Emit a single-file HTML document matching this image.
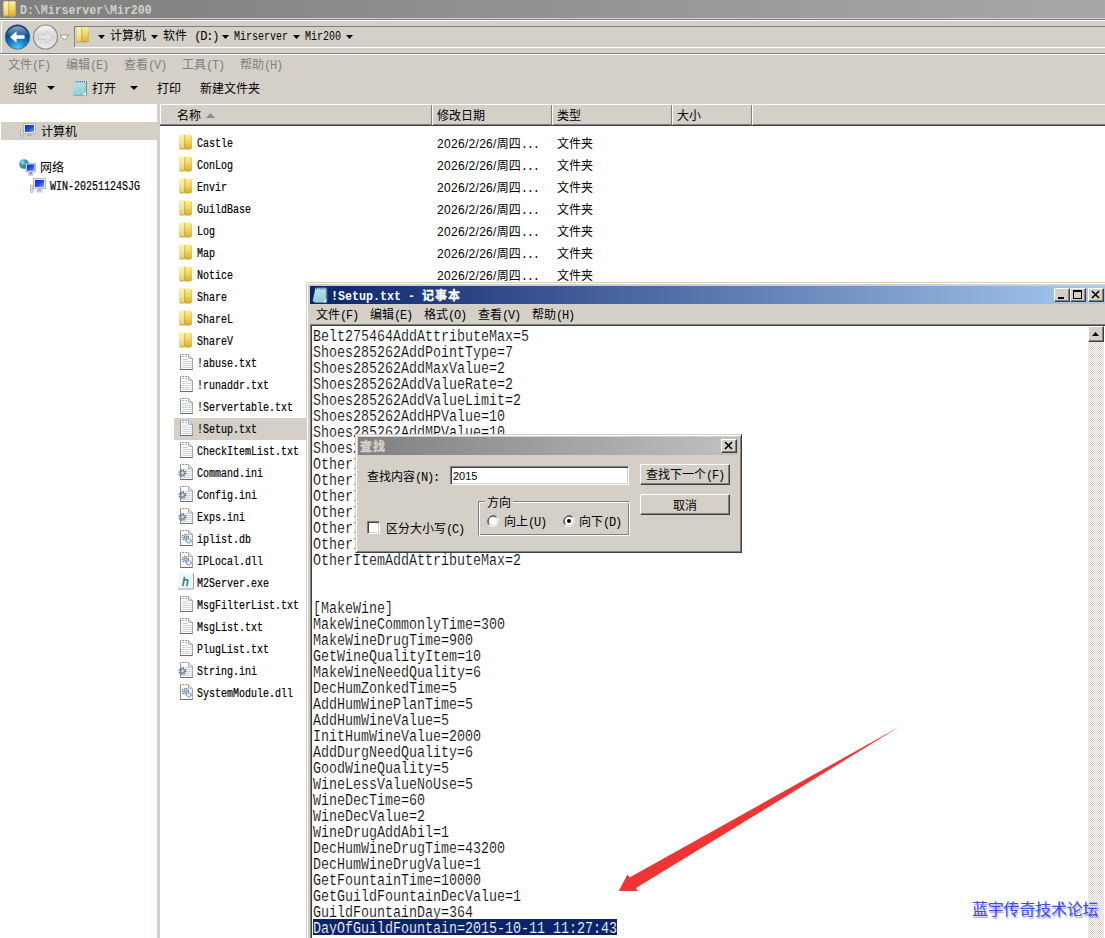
<!DOCTYPE html>
<html lang="zh-CN"><head><meta charset="utf-8"><title>D:\Mirserver\Mir200</title>
<style>
*{box-sizing:border-box;margin:0;padding:0}
html,body{width:1105px;height:938px;overflow:hidden;background:#d4d0c8}
body{position:relative;font-family:"Liberation Mono","Noto Sans CJK SC",monospace;font-size:12px;line-height:12px;color:#000}
.a{position:absolute;white-space:pre}
.t{position:absolute;white-space:pre;height:12px;line-height:16px}
.m{display:inline-block;transform:scaleX(.8333);transform-origin:0 0;white-space:pre;letter-spacing:0}
.l{letter-spacing:-1.2px}
.s{font-family:"Liberation Sans","Noto Sans CJK SC",sans-serif}
.b{font-weight:bold}
.hl{position:absolute;height:1px;left:0;width:1105px}
.btn{position:absolute;background:#d4d0c8;border:1px solid;border-color:#fff #404040 #404040 #fff;box-shadow:inset -1px -1px 0 #808080,inset 1px 1px 0 #d4d0c8}
.sunk{position:absolute;background:#fff;border:1px solid;border-color:#808080 #fff #fff #808080;box-shadow:inset 1px 1px 0 #404040,inset -1px -1px 0 #d4d0c8}
svg{position:absolute;overflow:visible}
</style></head>
<body>
<div class="a" style="left:0px;top:0px;width:1105px;height:18px;background:linear-gradient(90deg,#808080 0,#848484 15%,#a8a8a8 100%);"></div>
<svg style="left:3px;top:1px" width="13" height="16" viewBox="0 0 13 16"><linearGradient id="fgt" x1="0" y1="0" x2="0" y2="1"><stop offset="0" stop-color="#fcf29c"/><stop offset=".5" stop-color="#efd562"/><stop offset="1" stop-color="#d0aa32"/></linearGradient><path d="M.3 1.5 Q.3 .2 1.6 .2 L5 .2 L5.8 1 L6.6 .3 L11.4 .2 Q12.7 .2 12.7 1.5 L12.8 14 Q12.8 15.3 11.5 15.4 L7 15.7 L5.8 15 L2 15.7 Q.3 15.7 .3 14 Z" fill="url(#fgt)"/><rect x="1" y="1.2" width="4.2" height="13" fill="#fffbd8" opacity=".4"/><path d="M5.8 1 L5.8 15" stroke="#b0902a" stroke-width="1" opacity=".55"/><path d="M12.3 2 L12.4 14" stroke="#c9a638" stroke-width=".8" opacity=".6"/></svg>
<div class="t b" style="left:20px;top:3px;color:#d4d0c8;transform:scaleX(.962);transform-origin:0 0">D:\Mirserver\Mir200</div>
<div class="a" style="left:0px;top:19px;width:1105px;height:1px;background:#808080;"></div>
<div class="a" style="left:0px;top:20px;width:1105px;height:1px;background:#fff;"></div>
<div class="a" style="left:1px;top:21px;width:1px;height:32px;background:#fff;"></div>
<div class="a" style="left:0px;top:53px;width:1105px;height:1px;background:#808080;"></div>
<div class="a" style="left:0px;top:54px;width:1105px;height:1px;background:#fff;"></div>
<div class="a" style="left:74px;top:26px;width:1031px;height:1px;background:#808080;"></div>
<div class="a" style="left:74px;top:26px;width:1px;height:21px;background:#808080;"></div>
<div class="a" style="left:74px;top:47px;width:1031px;height:1px;background:#fff;"></div>
<svg style="left:4px;top:23px" width="66" height="28" viewBox="0 0 66 28">
<radialGradient id="bk" cx=".5" cy=".95" r=".9"><stop offset="0" stop-color="#4fd0f4"/><stop offset=".35" stop-color="#1b86c8"/><stop offset=".7" stop-color="#0d4f94"/><stop offset="1" stop-color="#0a3470"/></radialGradient>
<linearGradient id="bkh" x1="0" y1="0" x2="0" y2="1"><stop offset="0" stop-color="#fff" stop-opacity=".55"/><stop offset="1" stop-color="#fff" stop-opacity=".05"/></linearGradient>
<linearGradient id="fw" x1="0" y1="0" x2="0" y2="1"><stop offset="0" stop-color="#f4f4f4"/><stop offset=".5" stop-color="#d6d6d6"/><stop offset="1" stop-color="#ececec"/></linearGradient>
<circle cx="13.5" cy="14" r="12.3" fill="url(#bk)" stroke="#3a6f9f" stroke-width=".8"/>
<path d="M3 11 A11 11 0 0 1 24 11 Q13.5 15 3 11Z" fill="url(#bkh)"/>
<path d="M6 14 L12.5 8.2 L12.5 12.2 L20.5 12.2 L20.5 15.8 L12.5 15.8 L12.5 19.8 Z" fill="#fff"/>
<circle cx="41.5" cy="14" r="12" fill="url(#fw)" stroke="#8e8e8e" stroke-width="1.2"/>
<path d="M48.5 14 L42 7.8 L42 11.6 L34.5 11.6 L34.5 16.4 L42 16.4 L42 20.2 Z" fill="#e4e4e4" stroke="#c4c4c4" stroke-width=".8"/>
<path d="M56 12 H65 L60.5 17.2 Z" fill="#fff" stroke="#8c8c8c" stroke-width=".9"/>
</svg>
<svg style="left:76px;top:27px" width="13" height="16" viewBox="0 0 13 16"><linearGradient id="fga" x1="0" y1="0" x2="0" y2="1"><stop offset="0" stop-color="#fcf29c"/><stop offset=".5" stop-color="#efd562"/><stop offset="1" stop-color="#d0aa32"/></linearGradient><path d="M.3 1.5 Q.3 .2 1.6 .2 L5 .2 L5.8 1 L6.6 .3 L11.4 .2 Q12.7 .2 12.7 1.5 L12.8 14 Q12.8 15.3 11.5 15.4 L7 15.7 L5.8 15 L2 15.7 Q.3 15.7 .3 14 Z" fill="url(#fga)"/><rect x="1" y="1.2" width="4.2" height="13" fill="#fffbd8" opacity=".4"/><path d="M5.8 1 L5.8 15" stroke="#b0902a" stroke-width="1" opacity=".55"/><path d="M12.3 2 L12.4 14" stroke="#c9a638" stroke-width=".8" opacity=".6"/></svg>
<svg style="left:98px;top:35px" width="7" height="4" viewBox="0 0 7 4"><path d="M0 0H7L3.5 4Z" fill="#000"/></svg>
<div class="t" style="left:110px;top:29px;">计算机</div>
<svg style="left:151px;top:35px" width="7" height="4" viewBox="0 0 7 4"><path d="M0 0H7L3.5 4Z" fill="#000"/></svg>
<div class="t" style="left:163px;top:29px;">软件 <span class="l">(D:)</span></div>
<svg style="left:222px;top:35px" width="7" height="4" viewBox="0 0 7 4"><path d="M0 0H7L3.5 4Z" fill="#000"/></svg>
<div class="t" style="left:234px;top:29px;"><span class="m">Mirserver</span></div>
<svg style="left:293px;top:35px" width="7" height="4" viewBox="0 0 7 4"><path d="M0 0H7L3.5 4Z" fill="#000"/></svg>
<div class="t" style="left:305px;top:29px;"><span class="m">Mir200</span></div>
<svg style="left:346px;top:35px" width="7" height="4" viewBox="0 0 7 4"><path d="M0 0H7L3.5 4Z" fill="#000"/></svg>
<div class="t" style="left:8px;top:58px;color:#808080">文件<span class="l">(F)</span></div>
<div class="t" style="left:66px;top:58px;color:#808080">编辑<span class="l">(E)</span></div>
<div class="t" style="left:124px;top:58px;color:#808080">查看<span class="l">(V)</span></div>
<div class="t" style="left:182px;top:58px;color:#808080">工具<span class="l">(T)</span></div>
<div class="t" style="left:240px;top:58px;color:#808080">帮助<span class="l">(H)</span></div>
<div class="t" style="left:13px;top:82px;">组织</div>
<svg style="left:47px;top:86px" width="8" height="4" viewBox="0 0 8 4"><path d="M0 0H8L4.0 4Z" fill="#000"/></svg>
<svg style="left:72px;top:80px" width="15" height="16" viewBox="0 0 15 16"><linearGradient id="npa" x1="0" y1="0" x2=".3" y2="1"><stop offset="0" stop-color="#bfe7f1"/><stop offset="1" stop-color="#8fcfd8"/></linearGradient><path d="M3 .8 L14 .8 L14 15.2 L3 15.6 L.2 14 Z" fill="url(#npa)"/><path d="M10.5 15.4 L14 15.2 L14 10.5 Q13.2 14 10.5 15.4Z" fill="#fafdfe"/><path d="M14.4 1.5 V15.2" stroke="#6c747c" stroke-width=".9"/><path d="M1.5 15.3 L13.8 15.7" stroke="#8a92a4" stroke-width=".7"/><path d="M3.6 1.7H13" stroke="#2c343c" stroke-width="1.1" stroke-dasharray="1 1.1"/></svg>
<div class="t" style="left:92px;top:82px;">打开</div>
<svg style="left:130px;top:86px" width="8" height="4" viewBox="0 0 8 4"><path d="M0 0H8L4.0 4Z" fill="#000"/></svg>
<div class="t" style="left:157px;top:82px;">打印</div>
<div class="t" style="left:200px;top:82px;">新建文件夹</div>
<div class="a" style="left:0px;top:104px;width:157px;height:834px;background:#fff;"></div>
<div class="a" style="left:157px;top:104px;width:3px;height:834px;background:#d4d0c8;"></div>
<div class="a" style="left:160px;top:104px;width:945px;height:834px;background:#fff;"></div>
<div class="a" style="left:1px;top:122px;width:157px;height:18px;background:#d4d0c8;"></div>
<svg style="left:20px;top:123px" width="16" height="15" viewBox="0 0 16 15"><linearGradient id="cg1" x1="0" y1="0" x2="1" y2="1"><stop offset="0" stop-color="#1a2bb8"/><stop offset=".5" stop-color="#2447d8"/><stop offset="1" stop-color="#7fa8f0"/></linearGradient><rect x="3.5" y=".5" width="12" height="10" fill="#dfe6ee" stroke="#b4bcc8"/><rect x="5" y="2" width="9" height="7" fill="url(#cg1)"/><path d="M8 11H11L12.5 13.5H6.5Z" fill="#aab3bf"/><rect x="6" y="13.3" width="7" height="1.2" fill="#c9d0d8"/><rect x=".5" y="7" width="2.5" height="7.5" rx=".8" fill="#e9ecef" stroke="#9aa2ad" stroke-width=".8"/><rect x="1.2" y="11.5" width="1.2" height="1.2" fill="#9bbf6a"/></svg>
<div class="t" style="left:41px;top:125px;">计算机</div>
<svg style="left:19px;top:159px" width="17" height="17" viewBox="0 0 17 17"><radialGradient id="gl" cx=".35" cy=".3" r=".8"><stop offset="0" stop-color="#9fe0f8"/><stop offset=".5" stop-color="#2d8fd8"/><stop offset="1" stop-color="#1a4fa8"/></radialGradient><linearGradient id="ng" x1="0" y1="0" x2="1" y2="1"><stop offset="0" stop-color="#1a2bb8"/><stop offset=".5" stop-color="#2447d8"/><stop offset="1" stop-color="#6f9cf0"/></linearGradient><circle cx="5" cy="5" r="4.8" fill="url(#gl)"/><path d="M1.5 6.5 Q3 4.5 4.2 6 Q5 8 3.5 9.3 Q2 8.5 1.5 6.5Z M4.5 1 Q7 1.2 7.2 3 Q5.8 3.8 4.6 2.6Z" fill="#3fae49"/><rect x="7" y="4.5" width="9.5" height="8.5" fill="#dfe6ee" stroke="#9fb0c8" stroke-width=".8"/><rect x="8" y="5.5" width="7.5" height="6.2" fill="url(#ng)"/><path d="M10.5 13H13L14 15.5H9.5Z" fill="#8f9aa8"/><rect x="9" y="15.3" width="5.5" height="1.2" fill="#b4bcc8"/></svg>
<div class="t" style="left:40px;top:161px;">网络</div>
<svg style="left:30px;top:178px" width="16" height="15" viewBox="0 0 16 15"><linearGradient id="cg2" x1="0" y1="0" x2="1" y2="1"><stop offset="0" stop-color="#1a2bb8"/><stop offset=".5" stop-color="#2447d8"/><stop offset="1" stop-color="#7fa8f0"/></linearGradient><rect x="3.5" y=".5" width="12" height="10" fill="#dfe6ee" stroke="#b4bcc8"/><rect x="5" y="2" width="9" height="7" fill="url(#cg2)"/><path d="M8 11H11L12.5 13.5H6.5Z" fill="#aab3bf"/><rect x="6" y="13.3" width="7" height="1.2" fill="#c9d0d8"/><rect x=".5" y="7" width="2.5" height="7.5" rx=".8" fill="#e9ecef" stroke="#9aa2ad" stroke-width=".8"/><rect x="1.2" y="11.5" width="1.2" height="1.2" fill="#9bbf6a"/></svg>
<div class="t" style="left:50px;top:179px;-webkit-text-stroke:.2px #000"><span class="m">WIN-20251124SJG</span></div>
<div class="a" style="left:160px;top:104px;width:945px;height:22px;background:#d4d0c8;"></div>
<div class="a" style="left:160px;top:104px;width:945px;height:1px;background:#fff;"></div>
<div class="a" style="left:160px;top:104px;width:1px;height:20px;background:#fff;"></div>
<div class="a" style="left:160px;top:124px;width:945px;height:1px;background:#808080;"></div>
<div class="a" style="left:160px;top:125px;width:945px;height:1px;background:#404040;"></div>
<div class="a" style="left:431px;top:105px;width:1px;height:20px;background:#808080;"></div>
<div class="a" style="left:432px;top:105px;width:1px;height:20px;background:#fff;"></div>
<div class="a" style="left:551px;top:105px;width:1px;height:20px;background:#808080;"></div>
<div class="a" style="left:552px;top:105px;width:1px;height:20px;background:#fff;"></div>
<div class="a" style="left:671px;top:105px;width:1px;height:20px;background:#808080;"></div>
<div class="a" style="left:672px;top:105px;width:1px;height:20px;background:#fff;"></div>
<div class="a" style="left:751px;top:105px;width:1px;height:20px;background:#808080;"></div>
<div class="a" style="left:752px;top:105px;width:1px;height:20px;background:#fff;"></div>
<div class="t" style="left:177px;top:109px;">名称</div>
<svg style="left:206px;top:113px" width="9" height="5" viewBox="0 0 9 5"><path d="M0 5L4.5 0L9 5Z" fill="#8a8a8a"/></svg>
<div class="t" style="left:437px;top:109px;">修改日期</div>
<div class="t" style="left:557px;top:109px;">类型</div>
<div class="t" style="left:677px;top:109px;">大小</div>
<svg style="left:179px;top:134px" width="13" height="16" viewBox="0 0 13 16"><linearGradient id="fgf0" x1="0" y1="0" x2="0" y2="1"><stop offset="0" stop-color="#fcf29c"/><stop offset=".5" stop-color="#efd562"/><stop offset="1" stop-color="#d0aa32"/></linearGradient><path d="M.3 1.5 Q.3 .2 1.6 .2 L5 .2 L5.8 1 L6.6 .3 L11.4 .2 Q12.7 .2 12.7 1.5 L12.8 14 Q12.8 15.3 11.5 15.4 L7 15.7 L5.8 15 L2 15.7 Q.3 15.7 .3 14 Z" fill="url(#fgf0)"/><rect x="1" y="1.2" width="4.2" height="13" fill="#fffbd8" opacity=".4"/><path d="M5.8 1 L5.8 15" stroke="#b0902a" stroke-width="1" opacity=".55"/><path d="M12.3 2 L12.4 14" stroke="#c9a638" stroke-width=".8" opacity=".6"/></svg>
<div class="t" style="left:197px;top:136px;-webkit-text-stroke:.2px #000"><span class="m">Castle</span></div>
<div class="t" style="left:437px;top:136px;"><span class="s" style="letter-spacing:.3px">2026/2/26/</span>周四<span class="l">...</span></div>
<div class="t" style="left:557px;top:137px;">文件夹</div>
<svg style="left:179px;top:156px" width="13" height="16" viewBox="0 0 13 16"><linearGradient id="fgf1" x1="0" y1="0" x2="0" y2="1"><stop offset="0" stop-color="#fcf29c"/><stop offset=".5" stop-color="#efd562"/><stop offset="1" stop-color="#d0aa32"/></linearGradient><path d="M.3 1.5 Q.3 .2 1.6 .2 L5 .2 L5.8 1 L6.6 .3 L11.4 .2 Q12.7 .2 12.7 1.5 L12.8 14 Q12.8 15.3 11.5 15.4 L7 15.7 L5.8 15 L2 15.7 Q.3 15.7 .3 14 Z" fill="url(#fgf1)"/><rect x="1" y="1.2" width="4.2" height="13" fill="#fffbd8" opacity=".4"/><path d="M5.8 1 L5.8 15" stroke="#b0902a" stroke-width="1" opacity=".55"/><path d="M12.3 2 L12.4 14" stroke="#c9a638" stroke-width=".8" opacity=".6"/></svg>
<div class="t" style="left:197px;top:158px;-webkit-text-stroke:.2px #000"><span class="m">ConLog</span></div>
<div class="t" style="left:437px;top:158px;"><span class="s" style="letter-spacing:.3px">2026/2/26/</span>周四<span class="l">...</span></div>
<div class="t" style="left:557px;top:159px;">文件夹</div>
<svg style="left:179px;top:178px" width="13" height="16" viewBox="0 0 13 16"><linearGradient id="fgf2" x1="0" y1="0" x2="0" y2="1"><stop offset="0" stop-color="#fcf29c"/><stop offset=".5" stop-color="#efd562"/><stop offset="1" stop-color="#d0aa32"/></linearGradient><path d="M.3 1.5 Q.3 .2 1.6 .2 L5 .2 L5.8 1 L6.6 .3 L11.4 .2 Q12.7 .2 12.7 1.5 L12.8 14 Q12.8 15.3 11.5 15.4 L7 15.7 L5.8 15 L2 15.7 Q.3 15.7 .3 14 Z" fill="url(#fgf2)"/><rect x="1" y="1.2" width="4.2" height="13" fill="#fffbd8" opacity=".4"/><path d="M5.8 1 L5.8 15" stroke="#b0902a" stroke-width="1" opacity=".55"/><path d="M12.3 2 L12.4 14" stroke="#c9a638" stroke-width=".8" opacity=".6"/></svg>
<div class="t" style="left:197px;top:180px;-webkit-text-stroke:.2px #000"><span class="m">Envir</span></div>
<div class="t" style="left:437px;top:180px;"><span class="s" style="letter-spacing:.3px">2026/2/26/</span>周四<span class="l">...</span></div>
<div class="t" style="left:557px;top:181px;">文件夹</div>
<svg style="left:179px;top:200px" width="13" height="16" viewBox="0 0 13 16"><linearGradient id="fgf3" x1="0" y1="0" x2="0" y2="1"><stop offset="0" stop-color="#fcf29c"/><stop offset=".5" stop-color="#efd562"/><stop offset="1" stop-color="#d0aa32"/></linearGradient><path d="M.3 1.5 Q.3 .2 1.6 .2 L5 .2 L5.8 1 L6.6 .3 L11.4 .2 Q12.7 .2 12.7 1.5 L12.8 14 Q12.8 15.3 11.5 15.4 L7 15.7 L5.8 15 L2 15.7 Q.3 15.7 .3 14 Z" fill="url(#fgf3)"/><rect x="1" y="1.2" width="4.2" height="13" fill="#fffbd8" opacity=".4"/><path d="M5.8 1 L5.8 15" stroke="#b0902a" stroke-width="1" opacity=".55"/><path d="M12.3 2 L12.4 14" stroke="#c9a638" stroke-width=".8" opacity=".6"/></svg>
<div class="t" style="left:197px;top:202px;-webkit-text-stroke:.2px #000"><span class="m">GuildBase</span></div>
<div class="t" style="left:437px;top:202px;"><span class="s" style="letter-spacing:.3px">2026/2/26/</span>周四<span class="l">...</span></div>
<div class="t" style="left:557px;top:203px;">文件夹</div>
<svg style="left:179px;top:222px" width="13" height="16" viewBox="0 0 13 16"><linearGradient id="fgf4" x1="0" y1="0" x2="0" y2="1"><stop offset="0" stop-color="#fcf29c"/><stop offset=".5" stop-color="#efd562"/><stop offset="1" stop-color="#d0aa32"/></linearGradient><path d="M.3 1.5 Q.3 .2 1.6 .2 L5 .2 L5.8 1 L6.6 .3 L11.4 .2 Q12.7 .2 12.7 1.5 L12.8 14 Q12.8 15.3 11.5 15.4 L7 15.7 L5.8 15 L2 15.7 Q.3 15.7 .3 14 Z" fill="url(#fgf4)"/><rect x="1" y="1.2" width="4.2" height="13" fill="#fffbd8" opacity=".4"/><path d="M5.8 1 L5.8 15" stroke="#b0902a" stroke-width="1" opacity=".55"/><path d="M12.3 2 L12.4 14" stroke="#c9a638" stroke-width=".8" opacity=".6"/></svg>
<div class="t" style="left:197px;top:224px;-webkit-text-stroke:.2px #000"><span class="m">Log</span></div>
<div class="t" style="left:437px;top:224px;"><span class="s" style="letter-spacing:.3px">2026/2/26/</span>周四<span class="l">...</span></div>
<div class="t" style="left:557px;top:225px;">文件夹</div>
<svg style="left:179px;top:244px" width="13" height="16" viewBox="0 0 13 16"><linearGradient id="fgf5" x1="0" y1="0" x2="0" y2="1"><stop offset="0" stop-color="#fcf29c"/><stop offset=".5" stop-color="#efd562"/><stop offset="1" stop-color="#d0aa32"/></linearGradient><path d="M.3 1.5 Q.3 .2 1.6 .2 L5 .2 L5.8 1 L6.6 .3 L11.4 .2 Q12.7 .2 12.7 1.5 L12.8 14 Q12.8 15.3 11.5 15.4 L7 15.7 L5.8 15 L2 15.7 Q.3 15.7 .3 14 Z" fill="url(#fgf5)"/><rect x="1" y="1.2" width="4.2" height="13" fill="#fffbd8" opacity=".4"/><path d="M5.8 1 L5.8 15" stroke="#b0902a" stroke-width="1" opacity=".55"/><path d="M12.3 2 L12.4 14" stroke="#c9a638" stroke-width=".8" opacity=".6"/></svg>
<div class="t" style="left:197px;top:246px;-webkit-text-stroke:.2px #000"><span class="m">Map</span></div>
<div class="t" style="left:437px;top:246px;"><span class="s" style="letter-spacing:.3px">2026/2/26/</span>周四<span class="l">...</span></div>
<div class="t" style="left:557px;top:247px;">文件夹</div>
<svg style="left:179px;top:266px" width="13" height="16" viewBox="0 0 13 16"><linearGradient id="fgf6" x1="0" y1="0" x2="0" y2="1"><stop offset="0" stop-color="#fcf29c"/><stop offset=".5" stop-color="#efd562"/><stop offset="1" stop-color="#d0aa32"/></linearGradient><path d="M.3 1.5 Q.3 .2 1.6 .2 L5 .2 L5.8 1 L6.6 .3 L11.4 .2 Q12.7 .2 12.7 1.5 L12.8 14 Q12.8 15.3 11.5 15.4 L7 15.7 L5.8 15 L2 15.7 Q.3 15.7 .3 14 Z" fill="url(#fgf6)"/><rect x="1" y="1.2" width="4.2" height="13" fill="#fffbd8" opacity=".4"/><path d="M5.8 1 L5.8 15" stroke="#b0902a" stroke-width="1" opacity=".55"/><path d="M12.3 2 L12.4 14" stroke="#c9a638" stroke-width=".8" opacity=".6"/></svg>
<div class="t" style="left:197px;top:268px;-webkit-text-stroke:.2px #000"><span class="m">Notice</span></div>
<div class="t" style="left:437px;top:268px;"><span class="s" style="letter-spacing:.3px">2026/2/26/</span>周四<span class="l">...</span></div>
<div class="t" style="left:557px;top:269px;">文件夹</div>
<svg style="left:179px;top:288px" width="13" height="16" viewBox="0 0 13 16"><linearGradient id="fgf7" x1="0" y1="0" x2="0" y2="1"><stop offset="0" stop-color="#fcf29c"/><stop offset=".5" stop-color="#efd562"/><stop offset="1" stop-color="#d0aa32"/></linearGradient><path d="M.3 1.5 Q.3 .2 1.6 .2 L5 .2 L5.8 1 L6.6 .3 L11.4 .2 Q12.7 .2 12.7 1.5 L12.8 14 Q12.8 15.3 11.5 15.4 L7 15.7 L5.8 15 L2 15.7 Q.3 15.7 .3 14 Z" fill="url(#fgf7)"/><rect x="1" y="1.2" width="4.2" height="13" fill="#fffbd8" opacity=".4"/><path d="M5.8 1 L5.8 15" stroke="#b0902a" stroke-width="1" opacity=".55"/><path d="M12.3 2 L12.4 14" stroke="#c9a638" stroke-width=".8" opacity=".6"/></svg>
<div class="t" style="left:197px;top:290px;-webkit-text-stroke:.2px #000"><span class="m">Share</span></div>
<div class="t" style="left:437px;top:290px;"><span class="s" style="letter-spacing:.3px">2026/2/26/</span>周四<span class="l">...</span></div>
<div class="t" style="left:557px;top:291px;">文件夹</div>
<svg style="left:179px;top:310px" width="13" height="16" viewBox="0 0 13 16"><linearGradient id="fgf8" x1="0" y1="0" x2="0" y2="1"><stop offset="0" stop-color="#fcf29c"/><stop offset=".5" stop-color="#efd562"/><stop offset="1" stop-color="#d0aa32"/></linearGradient><path d="M.3 1.5 Q.3 .2 1.6 .2 L5 .2 L5.8 1 L6.6 .3 L11.4 .2 Q12.7 .2 12.7 1.5 L12.8 14 Q12.8 15.3 11.5 15.4 L7 15.7 L5.8 15 L2 15.7 Q.3 15.7 .3 14 Z" fill="url(#fgf8)"/><rect x="1" y="1.2" width="4.2" height="13" fill="#fffbd8" opacity=".4"/><path d="M5.8 1 L5.8 15" stroke="#b0902a" stroke-width="1" opacity=".55"/><path d="M12.3 2 L12.4 14" stroke="#c9a638" stroke-width=".8" opacity=".6"/></svg>
<div class="t" style="left:197px;top:312px;-webkit-text-stroke:.2px #000"><span class="m">ShareL</span></div>
<svg style="left:179px;top:332px" width="13" height="16" viewBox="0 0 13 16"><linearGradient id="fgf9" x1="0" y1="0" x2="0" y2="1"><stop offset="0" stop-color="#fcf29c"/><stop offset=".5" stop-color="#efd562"/><stop offset="1" stop-color="#d0aa32"/></linearGradient><path d="M.3 1.5 Q.3 .2 1.6 .2 L5 .2 L5.8 1 L6.6 .3 L11.4 .2 Q12.7 .2 12.7 1.5 L12.8 14 Q12.8 15.3 11.5 15.4 L7 15.7 L5.8 15 L2 15.7 Q.3 15.7 .3 14 Z" fill="url(#fgf9)"/><rect x="1" y="1.2" width="4.2" height="13" fill="#fffbd8" opacity=".4"/><path d="M5.8 1 L5.8 15" stroke="#b0902a" stroke-width="1" opacity=".55"/><path d="M12.3 2 L12.4 14" stroke="#c9a638" stroke-width=".8" opacity=".6"/></svg>
<div class="t" style="left:197px;top:334px;-webkit-text-stroke:.2px #000"><span class="m">ShareV</span></div>
<svg style="left:180px;top:354px" width="13" height="16" viewBox="0 0 13 16"><path d="M.5 .5 L8.5 .5 L12.3 4.3 L12.3 15.5 L.5 15.5 Z" fill="#fdfdfd" stroke="#909090"/><path d="M.2 15.5H12.6" stroke="#6e6e6e" stroke-width="1"/><path d="M8.5 .5 L8.5 4.3 L12.3 4.3" fill="#e9e9e9" stroke="#9a9a9a" stroke-width=".8"/><path d="M1 .5H8" stroke="#fff" stroke-width="1" stroke-dasharray="1.3 1.7" opacity=".7"/><path d="M2 5.5H8M2 7.5H11M2 9.5H11M2 11.5H11M2 13.5H11" stroke="#c7d7e6" stroke-width="1"/><path d="M2 2.5H4M5 2.5H7" stroke="#b0b0b0" stroke-width="1"/></svg>
<div class="t" style="left:197px;top:356px;-webkit-text-stroke:.2px #000"><span class="m">!abuse.txt</span></div>
<svg style="left:180px;top:376px" width="13" height="16" viewBox="0 0 13 16"><path d="M.5 .5 L8.5 .5 L12.3 4.3 L12.3 15.5 L.5 15.5 Z" fill="#fdfdfd" stroke="#909090"/><path d="M.2 15.5H12.6" stroke="#6e6e6e" stroke-width="1"/><path d="M8.5 .5 L8.5 4.3 L12.3 4.3" fill="#e9e9e9" stroke="#9a9a9a" stroke-width=".8"/><path d="M1 .5H8" stroke="#fff" stroke-width="1" stroke-dasharray="1.3 1.7" opacity=".7"/><path d="M2 5.5H8M2 7.5H11M2 9.5H11M2 11.5H11M2 13.5H11" stroke="#c7d7e6" stroke-width="1"/><path d="M2 2.5H4M5 2.5H7" stroke="#b0b0b0" stroke-width="1"/></svg>
<div class="t" style="left:197px;top:378px;-webkit-text-stroke:.2px #000"><span class="m">!runaddr.txt</span></div>
<svg style="left:180px;top:398px" width="13" height="16" viewBox="0 0 13 16"><path d="M.5 .5 L8.5 .5 L12.3 4.3 L12.3 15.5 L.5 15.5 Z" fill="#fdfdfd" stroke="#909090"/><path d="M.2 15.5H12.6" stroke="#6e6e6e" stroke-width="1"/><path d="M8.5 .5 L8.5 4.3 L12.3 4.3" fill="#e9e9e9" stroke="#9a9a9a" stroke-width=".8"/><path d="M1 .5H8" stroke="#fff" stroke-width="1" stroke-dasharray="1.3 1.7" opacity=".7"/><path d="M2 5.5H8M2 7.5H11M2 9.5H11M2 11.5H11M2 13.5H11" stroke="#c7d7e6" stroke-width="1"/><path d="M2 2.5H4M5 2.5H7" stroke="#b0b0b0" stroke-width="1"/></svg>
<div class="t" style="left:197px;top:400px;-webkit-text-stroke:.2px #000"><span class="m">!Servertable.txt</span></div>
<div class="a" style="left:174px;top:418px;width:200px;height:22px;background:#d4d0c8;"></div>
<svg style="left:180px;top:420px" width="13" height="16" viewBox="0 0 13 16"><path d="M.5 .5 L8.5 .5 L12.3 4.3 L12.3 15.5 L.5 15.5 Z" fill="#fdfdfd" stroke="#909090"/><path d="M.2 15.5H12.6" stroke="#6e6e6e" stroke-width="1"/><path d="M8.5 .5 L8.5 4.3 L12.3 4.3" fill="#e9e9e9" stroke="#9a9a9a" stroke-width=".8"/><path d="M1 .5H8" stroke="#fff" stroke-width="1" stroke-dasharray="1.3 1.7" opacity=".7"/><path d="M2 5.5H8M2 7.5H11M2 9.5H11M2 11.5H11M2 13.5H11" stroke="#c7d7e6" stroke-width="1"/><path d="M2 2.5H4M5 2.5H7" stroke="#b0b0b0" stroke-width="1"/></svg>
<div class="t" style="left:197px;top:422px;-webkit-text-stroke:.2px #000"><span class="m">!Setup.txt</span></div>
<svg style="left:180px;top:442px" width="13" height="16" viewBox="0 0 13 16"><path d="M.5 .5 L8.5 .5 L12.3 4.3 L12.3 15.5 L.5 15.5 Z" fill="#fdfdfd" stroke="#909090"/><path d="M.2 15.5H12.6" stroke="#6e6e6e" stroke-width="1"/><path d="M8.5 .5 L8.5 4.3 L12.3 4.3" fill="#e9e9e9" stroke="#9a9a9a" stroke-width=".8"/><path d="M1 .5H8" stroke="#fff" stroke-width="1" stroke-dasharray="1.3 1.7" opacity=".7"/><path d="M2 5.5H8M2 7.5H11M2 9.5H11M2 11.5H11M2 13.5H11" stroke="#c7d7e6" stroke-width="1"/><path d="M2 2.5H4M5 2.5H7" stroke="#b0b0b0" stroke-width="1"/></svg>
<div class="t" style="left:197px;top:444px;-webkit-text-stroke:.2px #000"><span class="m">CheckItemList.txt</span></div>
<svg style="left:180px;top:464px" width="13" height="16" viewBox="0 0 13 16"><path d="M.5 .5 L8.5 .5 L12.3 4.3 L12.3 15.5 L.5 15.5 Z" fill="#fdfdfd" stroke="#909090"/><path d="M.2 15.5H12.6" stroke="#6e6e6e" stroke-width="1"/><path d="M8.5 .5 L8.5 4.3 L12.3 4.3" fill="#e9e9e9" stroke="#9a9a9a" stroke-width=".8"/><path d="M1 .5H8" stroke="#fff" stroke-width="1" stroke-dasharray="1.3 1.7" opacity=".7"/><path d="M6 5.5H11M6 7.5H11M6 9.5H11M6 11.5H11M2 13.5H11" stroke="#c7d7e6" stroke-width="1"/><circle cx="2.5" cy="9" r="3.2" fill="none" stroke="#6f8299" stroke-width="2" stroke-dasharray="1.4 1.1"/><circle cx="2.5" cy="9" r="2.3" fill="#9fb2c8" stroke="#5f738b" stroke-width=".8"/><circle cx="2.5" cy="9" r=".9" fill="#eef3f8"/></svg>
<div class="t" style="left:197px;top:466px;-webkit-text-stroke:.2px #000"><span class="m">Command.ini</span></div>
<svg style="left:180px;top:486px" width="13" height="16" viewBox="0 0 13 16"><path d="M.5 .5 L8.5 .5 L12.3 4.3 L12.3 15.5 L.5 15.5 Z" fill="#fdfdfd" stroke="#909090"/><path d="M.2 15.5H12.6" stroke="#6e6e6e" stroke-width="1"/><path d="M8.5 .5 L8.5 4.3 L12.3 4.3" fill="#e9e9e9" stroke="#9a9a9a" stroke-width=".8"/><path d="M1 .5H8" stroke="#fff" stroke-width="1" stroke-dasharray="1.3 1.7" opacity=".7"/><path d="M6 5.5H11M6 7.5H11M6 9.5H11M6 11.5H11M2 13.5H11" stroke="#c7d7e6" stroke-width="1"/><circle cx="2.5" cy="9" r="3.2" fill="none" stroke="#6f8299" stroke-width="2" stroke-dasharray="1.4 1.1"/><circle cx="2.5" cy="9" r="2.3" fill="#9fb2c8" stroke="#5f738b" stroke-width=".8"/><circle cx="2.5" cy="9" r=".9" fill="#eef3f8"/></svg>
<div class="t" style="left:197px;top:488px;-webkit-text-stroke:.2px #000"><span class="m">Config.ini</span></div>
<svg style="left:180px;top:508px" width="13" height="16" viewBox="0 0 13 16"><path d="M.5 .5 L8.5 .5 L12.3 4.3 L12.3 15.5 L.5 15.5 Z" fill="#fdfdfd" stroke="#909090"/><path d="M.2 15.5H12.6" stroke="#6e6e6e" stroke-width="1"/><path d="M8.5 .5 L8.5 4.3 L12.3 4.3" fill="#e9e9e9" stroke="#9a9a9a" stroke-width=".8"/><path d="M1 .5H8" stroke="#fff" stroke-width="1" stroke-dasharray="1.3 1.7" opacity=".7"/><path d="M6 5.5H11M6 7.5H11M6 9.5H11M6 11.5H11M2 13.5H11" stroke="#c7d7e6" stroke-width="1"/><circle cx="2.5" cy="9" r="3.2" fill="none" stroke="#6f8299" stroke-width="2" stroke-dasharray="1.4 1.1"/><circle cx="2.5" cy="9" r="2.3" fill="#9fb2c8" stroke="#5f738b" stroke-width=".8"/><circle cx="2.5" cy="9" r=".9" fill="#eef3f8"/></svg>
<div class="t" style="left:197px;top:510px;-webkit-text-stroke:.2px #000"><span class="m">Exps.ini</span></div>
<svg style="left:180px;top:530px" width="13" height="16" viewBox="0 0 13 16"><path d="M.5 .5 L8.5 .5 L12.3 4.3 L12.3 15.5 L.5 15.5 Z" fill="#fdfdfd" stroke="#909090"/><path d="M.2 15.5H12.6" stroke="#6e6e6e" stroke-width="1"/><path d="M8.5 .5 L8.5 4.3 L12.3 4.3" fill="#e9e9e9" stroke="#9a9a9a" stroke-width=".8"/><path d="M1 .5H8" stroke="#fff" stroke-width="1" stroke-dasharray="1.3 1.7" opacity=".7"/><circle cx="5.4" cy="7.3" r="3" fill="#dcecf8" stroke="#2f5574" stroke-width="1.1" stroke-dasharray="1 1.1"/><circle cx="5.4" cy="7.3" r="1.3" fill="#f4f9fd" stroke="#2f5574" stroke-width=".8"/><circle cx="8.7" cy="10.7" r="2.3" fill="#cfe3f3" stroke="#2f5574" stroke-width="1" stroke-dasharray="1 .8"/><circle cx="8.7" cy="10.7" r=".8" fill="#fff"/></svg>
<div class="t" style="left:197px;top:532px;-webkit-text-stroke:.2px #000"><span class="m">iplist.db</span></div>
<svg style="left:180px;top:552px" width="13" height="16" viewBox="0 0 13 16"><path d="M.5 .5 L8.5 .5 L12.3 4.3 L12.3 15.5 L.5 15.5 Z" fill="#fdfdfd" stroke="#909090"/><path d="M.2 15.5H12.6" stroke="#6e6e6e" stroke-width="1"/><path d="M8.5 .5 L8.5 4.3 L12.3 4.3" fill="#e9e9e9" stroke="#9a9a9a" stroke-width=".8"/><path d="M1 .5H8" stroke="#fff" stroke-width="1" stroke-dasharray="1.3 1.7" opacity=".7"/><circle cx="5.4" cy="7.3" r="3" fill="#dcecf8" stroke="#2f5574" stroke-width="1.1" stroke-dasharray="1 1.1"/><circle cx="5.4" cy="7.3" r="1.3" fill="#f4f9fd" stroke="#2f5574" stroke-width=".8"/><circle cx="8.7" cy="10.7" r="2.3" fill="#cfe3f3" stroke="#2f5574" stroke-width="1" stroke-dasharray="1 .8"/><circle cx="8.7" cy="10.7" r=".8" fill="#fff"/></svg>
<div class="t" style="left:197px;top:554px;-webkit-text-stroke:.2px #000"><span class="m">IPLocal.dll</span></div>
<svg style="left:178px;top:573px" width="16" height="17" viewBox="0 0 16 17"><rect x="0" y="0" width="15.5" height="16" fill="#eef9fb"/><path d="M15.5 0 V16 H0" fill="none" stroke="#8fa0a6" stroke-width="1"/><text x="4" y="12.6" font-family="Liberation Sans, sans-serif" font-style="italic" font-size="12" fill="#2a6a66" stroke="#2a6a66" stroke-width=".3">h</text></svg>
<div class="t" style="left:197px;top:576px;-webkit-text-stroke:.2px #000"><span class="m">M2Server.exe</span></div>
<svg style="left:180px;top:596px" width="13" height="16" viewBox="0 0 13 16"><path d="M.5 .5 L8.5 .5 L12.3 4.3 L12.3 15.5 L.5 15.5 Z" fill="#fdfdfd" stroke="#909090"/><path d="M.2 15.5H12.6" stroke="#6e6e6e" stroke-width="1"/><path d="M8.5 .5 L8.5 4.3 L12.3 4.3" fill="#e9e9e9" stroke="#9a9a9a" stroke-width=".8"/><path d="M1 .5H8" stroke="#fff" stroke-width="1" stroke-dasharray="1.3 1.7" opacity=".7"/><path d="M2 5.5H8M2 7.5H11M2 9.5H11M2 11.5H11M2 13.5H11" stroke="#c7d7e6" stroke-width="1"/><path d="M2 2.5H4M5 2.5H7" stroke="#b0b0b0" stroke-width="1"/></svg>
<div class="t" style="left:197px;top:598px;-webkit-text-stroke:.2px #000"><span class="m">MsgFilterList.txt</span></div>
<svg style="left:180px;top:618px" width="13" height="16" viewBox="0 0 13 16"><path d="M.5 .5 L8.5 .5 L12.3 4.3 L12.3 15.5 L.5 15.5 Z" fill="#fdfdfd" stroke="#909090"/><path d="M.2 15.5H12.6" stroke="#6e6e6e" stroke-width="1"/><path d="M8.5 .5 L8.5 4.3 L12.3 4.3" fill="#e9e9e9" stroke="#9a9a9a" stroke-width=".8"/><path d="M1 .5H8" stroke="#fff" stroke-width="1" stroke-dasharray="1.3 1.7" opacity=".7"/><path d="M2 5.5H8M2 7.5H11M2 9.5H11M2 11.5H11M2 13.5H11" stroke="#c7d7e6" stroke-width="1"/><path d="M2 2.5H4M5 2.5H7" stroke="#b0b0b0" stroke-width="1"/></svg>
<div class="t" style="left:197px;top:620px;-webkit-text-stroke:.2px #000"><span class="m">MsgList.txt</span></div>
<svg style="left:180px;top:640px" width="13" height="16" viewBox="0 0 13 16"><path d="M.5 .5 L8.5 .5 L12.3 4.3 L12.3 15.5 L.5 15.5 Z" fill="#fdfdfd" stroke="#909090"/><path d="M.2 15.5H12.6" stroke="#6e6e6e" stroke-width="1"/><path d="M8.5 .5 L8.5 4.3 L12.3 4.3" fill="#e9e9e9" stroke="#9a9a9a" stroke-width=".8"/><path d="M1 .5H8" stroke="#fff" stroke-width="1" stroke-dasharray="1.3 1.7" opacity=".7"/><path d="M2 5.5H8M2 7.5H11M2 9.5H11M2 11.5H11M2 13.5H11" stroke="#c7d7e6" stroke-width="1"/><path d="M2 2.5H4M5 2.5H7" stroke="#b0b0b0" stroke-width="1"/></svg>
<div class="t" style="left:197px;top:642px;-webkit-text-stroke:.2px #000"><span class="m">PlugList.txt</span></div>
<svg style="left:180px;top:662px" width="13" height="16" viewBox="0 0 13 16"><path d="M.5 .5 L8.5 .5 L12.3 4.3 L12.3 15.5 L.5 15.5 Z" fill="#fdfdfd" stroke="#909090"/><path d="M.2 15.5H12.6" stroke="#6e6e6e" stroke-width="1"/><path d="M8.5 .5 L8.5 4.3 L12.3 4.3" fill="#e9e9e9" stroke="#9a9a9a" stroke-width=".8"/><path d="M1 .5H8" stroke="#fff" stroke-width="1" stroke-dasharray="1.3 1.7" opacity=".7"/><path d="M6 5.5H11M6 7.5H11M6 9.5H11M6 11.5H11M2 13.5H11" stroke="#c7d7e6" stroke-width="1"/><circle cx="2.5" cy="9" r="3.2" fill="none" stroke="#6f8299" stroke-width="2" stroke-dasharray="1.4 1.1"/><circle cx="2.5" cy="9" r="2.3" fill="#9fb2c8" stroke="#5f738b" stroke-width=".8"/><circle cx="2.5" cy="9" r=".9" fill="#eef3f8"/></svg>
<div class="t" style="left:197px;top:664px;-webkit-text-stroke:.2px #000"><span class="m">String.ini</span></div>
<svg style="left:180px;top:684px" width="13" height="16" viewBox="0 0 13 16"><path d="M.5 .5 L8.5 .5 L12.3 4.3 L12.3 15.5 L.5 15.5 Z" fill="#fdfdfd" stroke="#909090"/><path d="M.2 15.5H12.6" stroke="#6e6e6e" stroke-width="1"/><path d="M8.5 .5 L8.5 4.3 L12.3 4.3" fill="#e9e9e9" stroke="#9a9a9a" stroke-width=".8"/><path d="M1 .5H8" stroke="#fff" stroke-width="1" stroke-dasharray="1.3 1.7" opacity=".7"/><circle cx="5.4" cy="7.3" r="3" fill="#dcecf8" stroke="#2f5574" stroke-width="1.1" stroke-dasharray="1 1.1"/><circle cx="5.4" cy="7.3" r="1.3" fill="#f4f9fd" stroke="#2f5574" stroke-width=".8"/><circle cx="8.7" cy="10.7" r="2.3" fill="#cfe3f3" stroke="#2f5574" stroke-width="1" stroke-dasharray="1 .8"/><circle cx="8.7" cy="10.7" r=".8" fill="#fff"/></svg>
<div class="t" style="left:197px;top:686px;-webkit-text-stroke:.2px #000"><span class="m">SystemModule.dll</span></div>
<div class="a" style="left:306px;top:282px;width:810px;height:671px;background:#d4d0c8;border:1px solid;border-color:#d4d0c8 #404040 #404040 #d4d0c8;box-shadow:inset 1px 1px 0 #fff"></div>
<div class="a" style="left:310px;top:286px;width:795px;height:18px;background:linear-gradient(90deg,#0a246a 0,#a6caf0 100%);"></div>
<svg style="left:312px;top:287px" width="16" height="16" viewBox="0 0 15 16"><linearGradient id="npb" x1="0" y1="0" x2=".3" y2="1"><stop offset="0" stop-color="#bfe7f1"/><stop offset="1" stop-color="#8fcfd8"/></linearGradient><path d="M3 .8 L14 .8 L14 15.2 L3 15.6 L.2 14 Z" fill="url(#npb)"/><path d="M10.5 15.4 L14 15.2 L14 10.5 Q13.2 14 10.5 15.4Z" fill="#fafdfe"/><path d="M14.4 1.5 V15.2" stroke="#6c747c" stroke-width=".9"/><path d="M1.5 15.3 L13.8 15.7" stroke="#8a92a4" stroke-width=".7"/><path d="M3.6 1.7H13" stroke="#2c343c" stroke-width="1.1" stroke-dasharray="1 1.1"/></svg>
<div class="t b" style="left:331px;top:289px;color:#fff"><span class="m" style="transform:scaleX(.972)">!Setup.txt -</span></div>
<div class="t b" style="left:422px;top:289px;color:#fff;letter-spacing:1px;-webkit-text-stroke:.3px #fff">记事本</div>
<div class="btn" style="left:1054px;top:288px;width:16px;height:14px"></div>
<div class="btn" style="left:1070px;top:288px;width:16px;height:14px"></div>
<div class="btn" style="left:1088px;top:288px;width:16px;height:14px"></div>
<svg style="left:1054px;top:288px" width="50" height="14" viewBox="0 0 50 14"><rect x="4" y="9" width="6" height="2" fill="#000"/><rect x="19.5" y="2.5" width="8" height="8" fill="none" stroke="#000"/><rect x="19" y="2" width="9" height="2" fill="#000"/><path d="M38 3L45 10M45 3L38 10" stroke="#000" stroke-width="1.6"/></svg>
<div class="t" style="left:316px;top:308px;">文件<span class="l">(F)</span></div>
<div class="t" style="left:370px;top:308px;">编辑<span class="l">(E)</span></div>
<div class="t" style="left:424px;top:308px;">格式<span class="l">(O)</span></div>
<div class="t" style="left:478px;top:308px;">查看<span class="l">(V)</span></div>
<div class="t" style="left:532px;top:308px;">帮助<span class="l">(H)</span></div>
<div class="sunk" style="left:310px;top:324px;width:800px;height:630px"></div>
<div class="a" style="left:313px;top:919px;width:304px;height:16px;background:#0a246a;"></div>
<pre class="a" style="left:313px;top:329px;font:16px/16px 'Liberation Mono',monospace;transform:scaleX(.8333);transform-origin:0 0;-webkit-text-stroke:.2px #fff">Belt275464AddAttributeMax=5
Shoes285262AddPointType=7
Shoes285262AddMaxValue=2
Shoes285262AddValueRate=2
Shoes285262AddValueLimit=2
Shoes285262AddHPValue=10
Shoes285262AddMPValue=10
Shoes285262AddAttributeMax=5
OtherItemAddPointType=7
OtherItemAddMaxValue=2
OtherItemAddValueRate=2
OtherItemAddValueLimit=2
OtherItemAddHPValue=10
OtherItemAddMPValue=10
OtherItemAddAttributeMax=2


[MakeWine]
MakeWineCommonlyTime=300
MakeWineDrugTime=900
GetWineQualityItem=10
MakeWineNeedQuality=6
DecHumZonkedTime=5
AddHumWinePlanTime=5
AddHumWineValue=5
InitHumWineValue=2000
AddDurgNeedQuality=6
GoodWineQuality=5
WineLessValueNoUse=5
WineDecTime=60
WineDecValue=2
WineDrugAddAbil=1
DecHumWineDrugTime=43200
DecHumWineDrugValue=1
GetFountainTime=10000
GetGuildFountainDecValue=1
GuildFountainDay=364
<span style="color:#fff;-webkit-text-stroke:.2px #0a246a">DayOfGuildFountain=2015-10-11 11:27:43</span></pre>
<div class="a" style="left:1088px;top:326px;width:16px;height:612px;background:repeating-conic-gradient(#fff 0 25%,#d4d0c8 0 50%) 0 0/2px 2px;"></div>
<div class="btn" style="left:1088px;top:326px;width:16px;height:16px"></div>
<svg style="left:1088px;top:326px" width="16" height="16" viewBox="0 0 16 16"><path d="M4 10H11L7.5 6Z" fill="#000"/></svg>
<div class="a" style="left:355px;top:434px;width:387px;height:119px;background:#d4d0c8;border:1px solid;border-color:#d4d0c8 #404040 #404040 #d4d0c8;box-shadow:inset 1px 1px 0 #fff,inset -1px -1px 0 #808080"></div>
<div class="a" style="left:358px;top:437px;width:380px;height:18px;background:linear-gradient(90deg,#808080 0,#c0c0c0 100%);"></div>
<div class="t b" style="left:360px;top:440px;color:#d4d0c8;letter-spacing:1px;-webkit-text-stroke:.45px #d4d0c8">查找</div>
<div class="btn" style="left:721px;top:439px;width:16px;height:14px"></div>
<svg style="left:721px;top:439px" width="16" height="14" viewBox="0 0 16 14"><path d="M4 3L11 10M11 3L4 10" stroke="#000" stroke-width="1.6"/></svg>
<div class="t" style="left:367px;top:470px;">查找内容<span class="l">(N):</span></div>
<div class="sunk" style="left:450px;top:466px;width:179px;height:19px"></div>
<div class="t s" style="left:453px;top:468px;font-size:11px">2015</div>
<div class="btn" style="left:640px;top:464px;width:90px;height:21px"></div>
<div class="t" style="left:646px;top:468px;">查找下一个<span class="l">(F)</span></div>
<div class="btn" style="left:640px;top:494px;width:90px;height:21px"></div>
<div class="t" style="left:673px;top:499px;">取消</div>
<div class="sunk" style="left:367px;top:521px;width:13px;height:13px"></div>
<div class="t" style="left:386px;top:522px;">区分大小写<span class="l">(C)</span></div>
<div class="a" style="left:478px;top:501px;width:152px;height:35px;border:1px solid;border-color:#808080 #fff #fff #808080;box-shadow:inset 1px 1px 0 #fff,inset -1px -1px 0 #808080"></div>
<div class="t" style="left:485px;top:496px;background:#d4d0c8;padding:0 2px">方向</div>
<svg style="left:487px;top:515px" width="12" height="12" viewBox="0 0 12 12"><circle cx="6" cy="6" r="5.5" fill="#fff"/><path d="M1.8 10.2 A6 6 0 0 1 10.2 1.8" fill="none" stroke="#808080" stroke-width="1"/><path d="M2.6 9.4 A4.8 4.8 0 0 1 9.4 2.6" fill="none" stroke="#404040" stroke-width="1"/><path d="M10.2 1.8 A6 6 0 0 1 1.8 10.2" fill="none" stroke="#fff" stroke-width="1"/><path d="M9.4 2.6 A4.8 4.8 0 0 1 2.6 9.4" fill="none" stroke="#d4d0c8" stroke-width="1"/></svg>
<svg style="left:563px;top:515px" width="12" height="12" viewBox="0 0 12 12"><circle cx="6" cy="6" r="5.5" fill="#fff"/><path d="M1.8 10.2 A6 6 0 0 1 10.2 1.8" fill="none" stroke="#808080" stroke-width="1"/><path d="M2.6 9.4 A4.8 4.8 0 0 1 9.4 2.6" fill="none" stroke="#404040" stroke-width="1"/><path d="M10.2 1.8 A6 6 0 0 1 1.8 10.2" fill="none" stroke="#fff" stroke-width="1"/><path d="M9.4 2.6 A4.8 4.8 0 0 1 2.6 9.4" fill="none" stroke="#d4d0c8" stroke-width="1"/><circle cx="6" cy="6" r="2" fill="#000"/></svg>
<div class="t" style="left:504px;top:515px;">向上<span class="l">(U)</span></div>
<div class="t" style="left:579px;top:515px;">向下<span class="l">(D)</span></div>
<svg style="left:0;top:0" width="1105" height="938" viewBox="0 0 1105 938"><path d="M899.7 726.6 L629.5 877.5 L627.5 874.6 L618.8 891 L637.6 891 L636 888 Z" fill="#f03434"/></svg>
<div class="a s" style="left:972px;top:901px;font-size:16px;line-height:18px;color:#3a4be0;text-shadow:1px 2px 1px rgba(90,90,230,.55);letter-spacing:-.2px">蓝宇传奇技术论坛</div>
</body></html>
